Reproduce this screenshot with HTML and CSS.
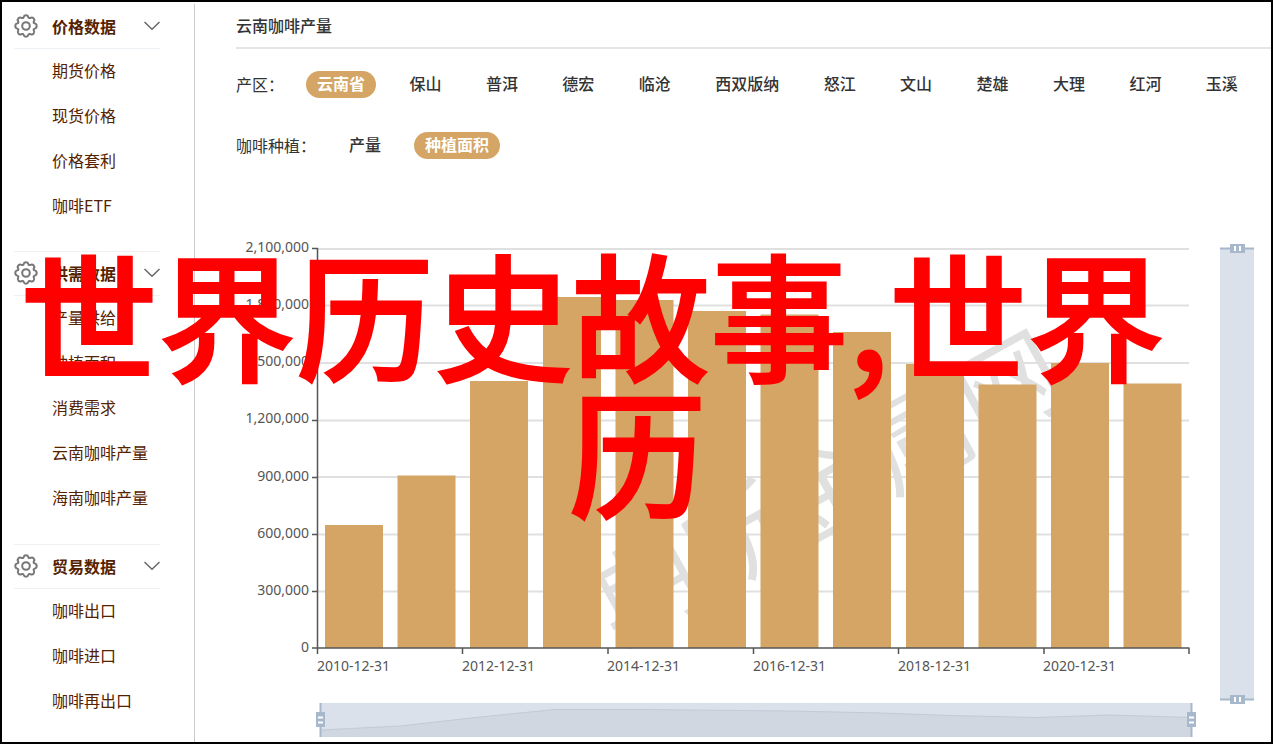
FILE: index.html
```html
<!DOCTYPE html>
<html lang="zh-CN">
<head>
<meta charset="utf-8">
<title>云南咖啡产量</title>
<link rel="stylesheet" href="styles.css">
</head>
<body>
<svg class="defs" width="0" height="0" aria-hidden="true">
  <symbol id="gear" viewBox="0 0 24 24">
    <path d="M12 1.200c1.600 0 2 .5 2.300 1.700.3 1.200 1.200 1.500 2.200.9 1.200-.7 1.900-.7 3 .4s1.100 1.800.4 3c-.6 1-.3 1.900.9 2.200 1.200.3 1.900.9 1.900 2.600s-.7 2.300-1.900 2.600c-1.200.3-1.500 1.200-.9 2.200.7 1.200.7 1.900-.4 3s-1.800 1.100-3 .4c-1-.6-1.900-.3-2.200.9-.3 1.200-.7 1.700-2.300 1.700s-2-.5-2.300-1.700c-.3-1.200-1.200-1.500-2.200-.9-1.200.7-1.900.7-3-.4s-1.100-1.800-.4-3c.6-1 .3-1.900-.9-2.200C2 14.300 1.300 13.700 1.300 12S2 9.700 3.200 9.400c1.200-.3 1.500-1.200.9-2.200-.7-1.200-.7-1.900.4-3s1.800-1.100 3-.4c1 .6 1.900.3 2.200-.9C10 1.700 10.400 1.200 12 1.200z"/>
    <circle cx="12" cy="12" r="3.800"/>
  </symbol>
  <symbol id="chevron" viewBox="0 0 16 10"><path d="M.5 1 8 8.300 15.500 1"/></symbol>
</svg>
<div class="page">
  <nav class="sidebar">
    <section class="group">
      <h2 class="group-title"><svg class="gear"><use href="#gear"/></svg><span>价格数据</span><svg class="chevron"><use href="#chevron"/></svg></h2>
      <a class="item" href="#">期货价格</a><a class="item" href="#">现货价格</a><a class="item" href="#">价格套利</a><a class="item" href="#">咖啡ETF</a>
    </section>
    <section class="group">
      <h2 class="group-title"><svg class="gear"><use href="#gear"/></svg><span>供需数据</span><svg class="chevron"><use href="#chevron"/></svg></h2>
      <a class="item" href="#">产量供给</a><a class="item" href="#">种植面积</a><a class="item" href="#">消费需求</a><a class="item" href="#">云南咖啡产量</a><a class="item" href="#">海南咖啡产量</a>
    </section>
    <section class="group">
      <h2 class="group-title"><svg class="gear"><use href="#gear"/></svg><span>贸易数据</span><svg class="chevron"><use href="#chevron"/></svg></h2>
      <a class="item" href="#">咖啡出口</a><a class="item" href="#">咖啡进口</a><a class="item" href="#">咖啡再出口</a>
    </section>
  </nav>
  <main class="main">
    <h1 class="title">云南咖啡产量</h1>
    <div class="filter">
      <span class="label">产区：</span>
      <div class="options spread">
        <button class="option active">云南省</button><button class="option">保山</button><button class="option">普洱</button><button class="option">德宏</button><button class="option">临沧</button><button class="option">西双版纳</button><button class="option">怒江</button><button class="option">文山</button><button class="option">楚雄</button><button class="option">大理</button><button class="option">红河</button><button class="option">玉溪</button>
      </div>
    </div>
    <div class="filter">
      <span class="label">咖啡种植：</span>
      <div class="options">
        <button class="option">产量</button><button class="option active">种植面积</button>
      </div>
    </div>
    <svg class="chart" viewBox="236 230 1035 509" role="img" aria-label="云南咖啡种植面积">
      <g class="grid">
        <path d="M318 249H1189M318 305.500H1189M318 363H1189M318 420.500H1189M318 477H1189M318 534.500H1189M318 591.500H1189"/>
      </g>
      <text class="watermark" text-anchor="middle" transform="translate(846 521) rotate(-29)">期所金属网</text>
      <g class="bars">
        <path d="M325 525h58V648h-58zM397.500 475.500h58V648h-58zM470 381h58V648h-58zM543 297h58V648h-58zM615.500 300h58V648h-58zM688 311h58V648h-58zM760.500 314.500h58V648h-58zM833 332h58V648h-58zM906 364h58V648h-58zM978.500 384.500h58V648h-58zM1051 363h58V648h-58zM1123.500 383.500h58V648h-58z"/>
      </g>
      <g class="axis">
        <path d="M317.500 248V654M312 248.500h6M312 305.500h6M312 362.500h6M312 420.500h6M312 477.500h6M312 534.500h6M312 591.500h6M312 648H1189.500M1189 648v6M462.500 648v6M608 648v6M753.500 648v6M898.500 648v6M1044 648v6"/>
      </g>
      <g class="tick" text-anchor="end">
        <text x="309" y="252">2,100,000</text><text x="309" y="309">1,800,000</text><text x="309" y="366">1,500,000</text><text x="309" y="423">1,200,000</text><text x="309" y="481">900,000</text><text x="309" y="538">600,000</text><text x="309" y="595">300,000</text><text x="309" y="652">0</text>
      </g>
      <g class="tick">
        <text x="317" y="671">2010-12-31</text><text x="462" y="671">2012-12-31</text><text x="607" y="671">2014-12-31</text><text x="753" y="671">2016-12-31</text><text x="898" y="671">2018-12-31</text><text x="1043" y="671">2020-12-31</text>
      </g>
      <g class="zoom">
        <path class="track" d="M320 703H1191V737H320zM1220 248H1254V699H1220z"/>
        <path class="shadow" d="M321 730 400 726 480 717 555 709.500 640 709.500 790 711 880 713 950 715.500 1035 717.500 1110 715 1191 717.500V737H321z"/>
        <path class="trend" d="M321 730 400 726 480 717 555 709.500 640 709.500 790 711 880 713 950 715.500 1035 717.500 1110 715 1191 717.500"/>
        <path class="rail" d="M320.500 703v34M1191.500 703v34M1220 248.500h34M1220 699.500h34"/>
        <path class="grip" d="M316 712h9v15h-9zM1187 712h9v15h-9zM1230 244h15v9h-15zM1230 695h15v9h-15z"/>
        <path class="slot" d="M318 717.500h5M318 722.500h5M1189 717.500h5M1189 722.500h5M1235 246v5M1240 246v5M1235 697v5M1240 697v5"/>
      </g>
    </svg>
  </main>
  <div class="headline"><span class="line">世界历史故事,世界</span><span class="line last">历</span></div>
</div>
</body>
</html>
```
FILE: styles.css
```css
* { box-sizing: border-box; }
body {
  margin: 0;
  background: #fff;
  color: #333;
  font: 16px/24px "Noto Sans CJK SC", sans-serif;
}
.defs { position: absolute; }
.page {
  position: relative;
  display: flex;
  min-height: 100vh;
  margin-right: 2px;
  border: 2px solid #000;
  overflow: hidden;
}
.sidebar {
  flex: none;
  width: 193px;
  margin-top: 2px;
  padding-left: 12px;
  padding-right: 34px;
  border-right: 1px solid #ccc;
}
.group { margin-bottom: 22px; }
.group + .group { margin-bottom: 23px; }
.group:last-child { margin-bottom: 0; }
.group-title {
  display: flex;
  align-items: center;
  height: 45px;
  margin: 0;
  padding-bottom: 1px;
  border-top: 1px solid #f0f0f0;
  border-bottom: 1px solid #f0f0f0;
  color: #552200;
  font-size: 16px;
  font-weight: 700;
}
.group:first-child .group-title { border-top: 0; border-bottom-color: #eef3f8; }
.gear {
  width: 24px;
  height: 24px;
  margin-right: 14px;
  fill: none;
  stroke: #777;
  stroke-width: 2;
}
.chevron {
  width: 16px;
  height: 10px;
  margin-left: auto;
  fill: none;
  stroke: #666;
  stroke-width: 1.5;
}
.item {
  display: block;
  height: 45px;
  padding-left: 38px;
  color: #552200;
  line-height: 43px;
  text-decoration: none;
  white-space: nowrap;
}
.group:last-child .item:last-child { height: 40px; }
.main {
  flex: 1;
  min-width: 0;
  padding-left: 41px;
}
.title {
  height: 47px;
  margin: 0 0 22px;
  border-bottom: 2px solid #e5e5e5;
  font-size: 16px;
  font-weight: 500;
  line-height: 47px;
}
.filter {
  display: flex;
  align-items: center;
  gap: 22px;
  margin-bottom: 34px;
  padding-right: 22px;
}
.label { padding-bottom: 2px; white-space: nowrap; }
.options { display: flex; gap: 22px; }
.spread { flex: 1; gap: 0; justify-content: space-between; }
.option {
  height: 27px;
  padding: 0 11px 2px;
  border: 0;
  border-radius: 14px;
  background: none;
  color: #333;
  font: 500 16px/25px "Noto Sans CJK SC", sans-serif;
  white-space: nowrap;
}
.option.active { background: #d4a564; color: #fff; font-weight: 700; }
.chart {
  display: block;
  width: 100%;
  margin-top: 71px;
}
.grid { fill: none; stroke: #e0e0e0; stroke-width: 2; }
.watermark { fill: #e0e0e0; font: 104px "Noto Sans CJK SC", sans-serif; }
.bars { fill: #d4a564; }
.axis { fill: none; stroke: #555; stroke-width: 1.5; }
.tick { fill: #555; font: 14px "Noto Sans", sans-serif; }
.track { fill: #dae1eb; }
.shadow { fill: #d0d7e1; }
.trend { fill: none; stroke: #c2cad8; }
.rail { fill: none; stroke: #a7b7cc; stroke-width: 2; }
.grip { fill: #a7b7cc; }
.slot { fill: none; stroke: #fff; stroke-width: 2; }
.headline {
  position: absolute;
  top: 241px;
  left: 18px;
  right: 16px;
  color: #f00;
  font-size: 138px;
  font-weight: 500;
  line-height: 137px;
  -webkit-text-stroke: 2px #f00;
}
.line { display: block; white-space: nowrap; }
.last { text-align: center; }
```
